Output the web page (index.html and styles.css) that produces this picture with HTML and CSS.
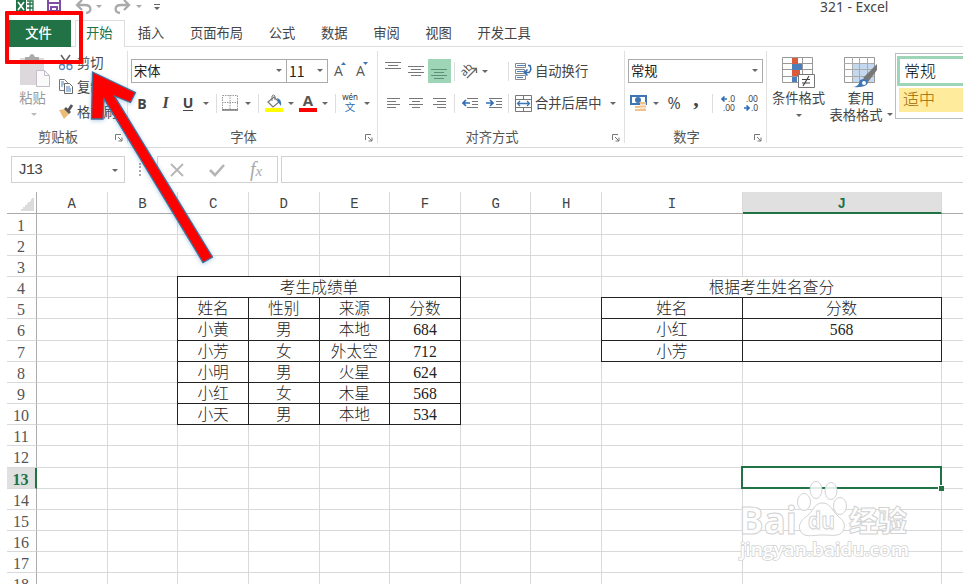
FILE: index.html
```html
<!DOCTYPE html>
<html lang="zh-CN">
<head>
    <meta charset="UTF-8">
    <title>321 - Excel</title>
    <link rel="stylesheet" href="styles.css">
</head>
<body>
    <div class="titlebar">
        <svg class="quick" width="170" height="20" viewBox="0 0 170 20">
            <rect x="16" y="0" width="10" height="14" fill="#217346"/>
            <path d="M18 2l6 8M24 2l-6 8" stroke="#fff" stroke-width="1.6"/>
            <path d="M27 1h6v11h-6M27 4h6M27 8h6M30 1v11" stroke="#217346" stroke-width="1.3" fill="none"/>
            <path d="M48 0v11h12V0M48 3h12M51 11V7h6v4" stroke="#7c4fa5" stroke-width="2" fill="none"/>
            <path d="M82 0l-5 5 5 5M77 5h8c7 0 7 7 1 8" stroke="#aaa" stroke-width="2.3" fill="none"/>
            <path d="M96 5h6l-3 3zM136 5h6l-3 3z" fill="#aaa"/>
            <path d="M124 0l5 5-5 5M129 5h-8c-7 0-7 7-1 8" stroke="#aaa" stroke-width="2.3" fill="none"/>
            <path d="M154 4h6v1h-6zM154 7h6l-3 3z" fill="#666"/>
        </svg>
        <span class="title">321 - Excel</span>
    </div>

    <div class="tabs">
        <span class="file">文件</span>
        <span class="tab active">开始</span>
        <span class="tab">插入</span>
        <span class="tab">页面布局</span>
        <span class="tab">公式</span>
        <span class="tab">数据</span>
        <span class="tab">审阅</span>
        <span class="tab">视图</span>
        <span class="tab">开发工具</span>
    </div>

    <div class="ribbon">
        <div class="group clipboard">
            <div class="clip-body">
                <div class="paste">
                    <svg width="32" height="35" viewBox="0 0 32 35">
                        <path d="M1 5h24v27H1z" fill="#dcd8dc"/>
                        <path d="M6 4h4q1-3 3-3t3 3h4v5H6z" fill="#aaa"/>
                        <path d="M17.500 17.500h8l5 5v11h-13z" fill="#fafafa" stroke="#c4bcc8"/>
                        <path d="M25.500 17.500v5h5" fill="none" stroke="#c4bcc8"/>
                    </svg>
                    <span>粘贴</span>
                    <i class="arrow dim"></i>
                </div>
                <div class="clip-list">
                    <div>
                        <svg width="16" height="17" viewBox="0 0 16 17">
                            <path d="M3 1l7 10M12 1L5 11" stroke="#666" stroke-width="1.6"/>
                            <circle cx="4" cy="13" r="2.500" fill="none" stroke="#5b8ac0" stroke-width="1.300"/>
                            <circle cx="11.500" cy="13" r="2.500" fill="none" stroke="#5b8ac0" stroke-width="1.300"/>
                        </svg>
                        <span>剪切</span>
                    </div>
                    <div>
                        <svg width="16" height="17" viewBox="0 0 16 17">
                            <path d="M1.500 1.500h5l3 3v8h-8z" fill="#fff" stroke="#777"/>
                            <path d="M6.500 5.500h5l3 3v7h-8z" fill="#fff" stroke="#666"/>
                            <path d="M3 4h3M3 6h3M3 8h2M8 9h4M8 11h5M8 13h5" stroke="#4d83bd"/>
                        </svg>
                        <span>复制</span>
                    </div>
                    <div>
                        <svg width="16" height="17" viewBox="0 0 16 17">
                            <path d="M1 7l6-1 4 5-5 5z" fill="#edbd78"/>
                            <path d="M7 5l5 5M10 8l4-6" stroke="#555" stroke-width="2.800"/>
                        </svg>
                        <span>格式刷</span>
                    </div>
                </div>
            </div>
            <div class="label">剪贴板</div>
            <svg class="launch" width="8" height="8"><use href="#launch"/></svg>
        </div>

        <div class="group font">
            <div class="row1">
                <div class="select name">宋体<i class="arrow"></i></div>
                <div class="select size">11<i class="arrow"></i></div>
                <svg class="grow" width="40" height="20" viewBox="0 0 40 20">
                    <text x="1" y="15" class="a">A</text>
                    <path d="M8 4l2.500-3L13 4z" fill="#3e75b5"/>
                    <text x="23" y="15" class="a">A</text>
                    <path d="M30 1h5l-2.500 3z" fill="#3e75b5"/>
                </svg>
            </div>
            <div class="row2 font-tools">
                <b>B</b>
                <b class="italic">I</b>
                <b class="under">U</b>
                <i class="arrow"></i>
                <i class="sep"></i>
                <svg width="16" height="16" viewBox="0 0 16 16">
                    <path d="M.5.5h15v14H.5zM8 0v15M0 7.500h16" fill="none" stroke="#999" stroke-dasharray="1.500 1"/>
                    <path d="M0 15h16" stroke="#666" stroke-width="1.300"/>
                </svg>
                <i class="arrow"></i>
                <i class="sep"></i>
                <svg width="18" height="18" viewBox="0 0 18 18">
                    <path d="M3 8l6-5 5 5-6 5z" fill="#fff" stroke="#777" stroke-width="1.200"/>
                    <path d="M7 7V2q1.500-2 3 0v4" fill="none" stroke="#777"/>
                    <path d="M12 4q5 1 4 8l-3-4z" fill="#3e75b5"/>
                    <path d="M0 14h18v4H0z" fill="#ff0"/>
                </svg>
                <i class="arrow"></i>
                <svg width="18" height="22" viewBox="0 -4 18 22">
                    <text x="9" y="12" class="fontcolor">A</text>
                    <path d="M0 14h18v4H0z" fill="#f00"/>
                </svg>
                <i class="arrow"></i>
                <i class="sep"></i>
                <svg width="18" height="22" viewBox="0 0 18 22">
                    <text x="9" y="8" class="wen">wén</text>
                    <text x="9" y="19" class="wen-zh">文</text>
                </svg>
                <i class="arrow"></i>
            </div>
            <div class="label">字体</div>
            <svg class="launch" width="8" height="8"><use href="#launch"/></svg>
        </div>

        <div class="group align">
            <div class="row1 align-tools">
                <svg width="16" height="22"><path d="M0 2.500h16M3 5.500h10M0 8.500h16" stroke="#777"/></svg>
                <svg width="16" height="22"><path d="M0 6.500h16M3 9.500h10M0 12.500h16M3 15.500h10" stroke="#777"/></svg>
                <span class="picked"><svg width="16" height="22"><path d="M0 10.500h16M3 13.500h10M0 16.500h16M3 19.500h10" stroke="#5f8f76"/></svg></span>
                <i class="sep"></i>
                <svg width="18" height="18" viewBox="0 0 18 18">
                    <text x="0" y="11" class="ab" transform="rotate(-45 6 9)">ab</text>
                    <path d="M6 16l9-9M11 6.500h4.500V11" fill="none" stroke="#666" stroke-width="1.300"/>
                </svg>
                <i class="arrow first"></i>
                <i class="sep"></i>
                <svg width="17" height="17" viewBox="0 0 17 17">
                    <path d="M.5.500h10v4H.5zM.5 6.500h9v4h-9zM.5 12.500h10v4H.5z" fill="#fff" stroke="#888"/>
                    <path d="M2 2.500h9M2 8.500h7M2 14.500h6" stroke="#4d83bd"/>
                    <path d="M13 2.500h2q2 5-1 7h-4M12.500 6.500l-3 3 3 3" fill="none" stroke="#2f6db5" stroke-width="1.600"/>
                </svg>
                <span>自动换行</span>
            </div>
            <div class="row2 align-tools">
                <svg width="13" height="12"><path d="M0 1.500h13M0 4.500h9M0 7.500h13M0 10.500h9" stroke="#777"/></svg>
                <svg width="14" height="12"><path d="M0 1.500h14M3 4.500h8M0 7.500h14M3 10.500h8" stroke="#777"/></svg>
                <svg width="13" height="12"><path d="M0 1.500h13M4 4.500h9M0 7.500h13M4 10.500h9" stroke="#777"/></svg>
                <i class="sep"></i>
                <svg width="16" height="12"><path d="M5 1.500h11M10 4.500h6M10 7.500h6M5 10.500h11" stroke="#777"/><path d="M1 6h7M4 3L1 6l3 3" fill="none" stroke="#2f6db5" stroke-width="1.700"/></svg>
                <svg width="16" height="12"><path d="M3 1.500h13M10 4.500h6M10 7.500h6M3 10.500h13" stroke="#777"/><path d="M0 6h7M4 3l3 3-3 3" fill="none" stroke="#2f6db5" stroke-width="1.700"/></svg>
                <i class="sep"></i>
                <svg width="17" height="17" viewBox="0 0 17 17">
                    <path d="M.5.500h16v16H.5zM.5 4.500h16M.5 12.500h16M8.500 0v4M8.500 13v4" fill="#fff" stroke="#777"/>
                    <path d="M3 8.500h11M5 6L2.500 8.500 5 11M12 6l2.500 2.500L12 11" fill="none" stroke="#3e75b5" stroke-width="1.300"/>
                </svg>
                <span>合并后居中</span>
                <i class="arrow"></i>
            </div>
            <div class="label">对齐方式</div>
            <svg class="launch" width="8" height="8"><use href="#launch"/></svg>
        </div>

        <div class="group number">
            <div class="row1">
                <div class="select format">常规<i class="arrow"></i></div>
            </div>
            <div class="row2 number-tools">
                <svg width="18" height="18" viewBox="0 0 18 18">
                    <path d="M0 1h17v10H0z" fill="#3e75b5"/>
                    <path d="M2 3h13v6H2z" fill="#fff"/>
                    <circle cx="8" cy="6" r="3" fill="#3e75b5"/>
                    <path d="M10 8h6v9h-6zM5 12h6v5H5z" fill="#f0c28a"/>
                    <path d="M10 11h6M10 14h6M5 14.500h5" stroke="#fff"/>
                </svg>
                <i class="arrow"></i>
                <span class="percent">%</span>
                <span class="comma">,</span>
                <i class="sep"></i>
                <svg width="17" height="20" viewBox="0 0 17 20">
                    <path d="M2 6h5M4.500 3.500L2 6l2.500 2.500" fill="none" stroke="#2f6db5" stroke-width="1.700"/>
                    <text x="8" y="9" class="dec">.0</text>
                    <text x="3" y="18" class="dec">.00</text>
                </svg>
                <svg width="17" height="20" viewBox="0 0 17 20">
                    <text x="3" y="9" class="dec">.00</text>
                    <path d="M1 15h5M3.500 12.500L6 15l-2.500 2.500" fill="none" stroke="#2f6db5" stroke-width="1.700"/>
                    <text x="8" y="18" class="dec">.0</text>
                </svg>
            </div>
            <div class="label">数字</div>
            <svg class="launch" width="8" height="8"><use href="#launch"/></svg>
        </div>

        <div class="group styles">
            <div class="big">
                <svg width="34" height="32" viewBox="0 0 34 32">
                    <path d="M.5.500h30v25H.5zM10.500 0v25M20.500 0v25M0 6.500h30M0 12.500h30M0 19.500h30" fill="#fff" stroke="#999"/>
                    <path d="M10 1h6v6h-6zM10 13h8v6h-8z" fill="#dd5b3a"/>
                    <path d="M10 7h10v6H10zM10 20h5v5h-5z" fill="#4a7fbb"/>
                    <path d="M16.500 17.500h16v13h-16z" fill="#fff" stroke="#777"/>
                    <path d="M20 22.500h8M20 26h8M27 19l-6 10" stroke="#444" stroke-width="1.200"/>
                </svg>
                <span>条件格式</span>
                <i class="arrow"></i>
            </div>
            <div class="big table-format">
                <svg width="34" height="32" viewBox="0 0 34 32">
                    <path d="M.5.500h30v25H.5z" fill="#fff" stroke="#999"/>
                    <path d="M8 6h22v19H8z" fill="#c4d9ef"/>
                    <path d="M8.500 0v25M15.500 0v25M23.500 0v25M0 6.500h30M0 12.500h30M0 19.500h30" stroke="#aaa"/>
                    <path d="M33 7v6l-9 12-5-4z" fill="#777"/>
                    <path d="M9 30q6 0 7-7 6-3 8 2 0 6-15 5z" fill="#3e75b5"/>
                    <circle cx="20" cy="26" r="2" fill="#fff"/>
                </svg>
                <span>套用</span>
                <span class="wide">表格格式<i class="arrow"></i></span>
            </div>
            <div class="gallery">
                <div class="normal">常规</div>
                <div class="neutral">适中</div>
            </div>
        </div>
    </div>

    <div class="formula">
        <div class="namebox">J13<i class="arrow"></i></div>
        <span class="dots"></span>
        <div class="fx">
            <svg width="14" height="14"><path d="M1 1l12 12M13 1L1 13" stroke="#b5b5b5" stroke-width="1.800"/></svg>
            <svg width="16" height="14"><path d="M1 7l5 5 9-10" fill="none" stroke="#b5b5b5" stroke-width="2.600"/></svg>
            <span>f<small>x</small></span>
        </div>
        <div class="input"></div>
    </div>

    <div class="sheet" id="sheet"></div>

    <svg class="watermark" width="180" height="90" viewBox="0 0 180 90">
        <text x="3" y="54" class="brand" textLength="58" lengthAdjust="spacingAndGlyphs">Bai</text>
        <ellipse cx="68" cy="22" rx="6.500" ry="8.500"/>
        <ellipse cx="80" cy="10" rx="6" ry="8.500"/>
        <ellipse cx="95" cy="11" rx="6" ry="8.500"/>
        <ellipse cx="104" cy="26" rx="6.500" ry="8.500"/>
        <path d="M86 23c9 0 10 8 16 13s8 9 5 15-12 4-21 4-17 3-21-3 0-12 6-16 7-13 15-13z"/>
        <text x="72" y="49" class="du" textLength="27" lengthAdjust="spacingAndGlyphs">du</text>
        <text x="113" y="52" class="zh" textLength="58">经验</text>
        <text x="4" y="76" class="url" textLength="169" lengthAdjust="spacingAndGlyphs">jingyan.baidu.com</text>
    </svg>

    <div class="highlight"></div>
    <svg class="pointer" width="240" height="280" viewBox="0 0 240 280">
        <path d="M92.500 72L135.500 92.500 130.500 102.500 114.500 96 212.500 257 203 262.500 104 99 103 119 91.500 119z"/>
    </svg>

    <svg width="0" height="0" class="defs">
        <symbol id="launch" viewBox="0 0 8 8">
            <path d="M.5 6V.5H6M3 3l4 4M7 3.500V7H3.500" fill="none" stroke="#777"/>
        </symbol>
    </svg>

    <script>
      const sheet = document.getElementById("sheet");
      const letters = "ABCDEFGHIJ";

      // cells with borders, by address
      const boxed = {};
      const scores = [
          ["姓名", "性别", "来源", "分数"],
          ["小黄", "男", "本地", "684"],
          ["小芳", "女", "外太空", "712"],
          ["小明", "男", "火星", "624"],
          ["小红", "女", "木星", "568"],
          ["小天", "男", "本地", "534"]
      ];
      const lookup = [["姓名", "分数"], ["小红", "568"], ["小芳", ""]];
      scores.forEach((r, i) => r.forEach((v, j) => boxed["CDEF"[j] + (i + 5)] = v));
      lookup.forEach((r, i) => r.forEach((v, j) => boxed["IJ"[j] + (i + 5)] = v));

      const merged = { C4: ["考生成绩单", 4, "cell box"], I4: ["根据考生姓名查分", 2, "cell"] };
      const covered = ["D4", "E4", "F4", "J4"];

      const add = (cls, text, row, col, span = 1) => {
          let div = document.createElement("div");
          div.className = cls;
          div.textContent = text;
          div.style.gridArea = `${row} / ${col} / auto / span ${span}`;
          sheet.appendChild(div);
      };

      add("corner", "", 1, 1);
      [...letters, ""].forEach((l, i) => add(l === "J" ? "col on" : "col", l, 1, i + 2));

      for (let r = 1; r <= 18; r++) {
          add(r === 13 ? "num on" : "num", r, r + 1, 1);
          [...letters, ""].forEach((l, i) => {
              let id = l + r;
              if (covered.includes(id)) return;
              if (merged[id]) {
                  add(merged[id][2], merged[id][0], r + 1, i + 2, merged[id][1]);
              } else if (l && id in boxed) {
                  add("cell box", boxed[id], r + 1, i + 2);
              } else {
                  add(id === "J13" ? "cell selected" : "cell", "", r + 1, i + 2);
              }
          });
      }
    </script>
</body>
</html>
```

FILE: styles.css
```css
* {
    box-sizing: border-box;
}
body {
    position: relative;
    width: 963px;
    height: 584px;
    margin: 0;
    overflow: hidden;
    background-color: white;
    color: #444;
    font-family: "Noto Sans", "Noto Sans CJK SC", sans-serif;
    font-size: 13.3px;
}
svg {
    display: block;
    flex-shrink: 0;
}
.defs {
    position: absolute;
}
.arrow {
    display: block;
    width: 0;
    border: 3px solid transparent;
    border-top: 3.5px solid #666;
    border-bottom: 0;
}
.arrow.dim {
    border-top-color: #bbb;
}
.sep {
    width: 1px;
    height: 19px;
    background-color: #ddd;
}

/* title and tabs */
.titlebar {
    display: flex;
    height: 20px;
}
.title {
    margin-left: 650px;
    line-height: 14px;
    font-size: 13.9px;
}
.tabs {
    display: flex;
    height: 27px;
    margin-left: 7px;
    border-bottom: 1px solid #ddd;
    line-height: 25px;
    font-family: "Noto Sans CJK SC", sans-serif;
}
.file {
    width: 62px;
    height: 27px;
    margin: 0 4px 0 2px;
    padding-right: 3px;
    background-color: #217346;
    color: white;
    text-align: center;
    font-weight: 500;
}
.tab {
    padding: 0 12.8px;
}
.tab.active {
    width: 50px;
    height: 27px;
    padding: 0 10px;
    border: 1px solid #ddd;
    border-bottom: 0;
    background-color: white;
    color: #217346;
    line-height: 24px;
}

/* ribbon */
.ribbon {
    display: flex;
    height: 101px;
    margin-left: 7px;
    border-bottom: 1px solid #d8d8d8;
    font-family: "Noto Sans CJK SC", sans-serif;
}
.group {
    position: relative;
    flex-shrink: 0;
    padding-top: 12px;
}
.group::after {
    content: "";
    position: absolute;
    top: 4px;
    right: 0;
    width: 1px;
    height: 92px;
    background-color: #e0e0e0;
}
.clipboard {
    width: 121px;
}
.font {
    width: 250px;
    padding-left: 3px;
}
.align {
    width: 247px;
    padding-left: 4px;
}
.number {
    width: 142px;
    padding-left: 3px;
}
.label {
    position: absolute;
    left: 0;
    right: 19px;
    bottom: 1px;
    text-align: center;
    line-height: 18px;
    color: #555;
}
.launch {
    position: absolute;
    right: 5px;
    bottom: 5px;
}
.row1 {
    display: flex;
    align-items: center;
    height: 24px;
}
.row2 {
    display: grid;
    height: 22px;
    margin-top: 9px;
    align-items: center;
    justify-items: center;
}
.clip-body {
    display: flex;
    margin-top: -6px;
}
.paste {
    display: flex;
    flex-direction: column;
    align-items: center;
    width: 51px;
    color: #999;
    line-height: 20px;
}
.paste .arrow {
    margin: 5px 0 0 3px;
}
.paste svg {
    margin-left: 4px;
}
.clip-list > div {
    display: flex;
    align-items: center;
    gap: 3px;
    height: 24.5px;
    white-space: nowrap;
}
.clip-list {
    margin-top: -3px;
}
.select {
    display: flex;
    align-items: center;
    justify-content: space-between;
    height: 24px;
    padding: 0 4px 1px 2px;
    border: 1px solid #ababab;
    color: #222;
}
.select.name {
    width: 156px;
}
.select.size {
    width: 42px;
    margin-left: -1px;
    font-size: 14px;
}
.select.format {
    width: 135px;
}
.grow {
    margin-left: 5px;
}
.a {
    font: 14px "Open Sans", sans-serif;
    fill: #555;
}
.font-tools {
    grid-template-columns: 22px 25px 20px 16px 4px 24px 12px 8px 23px 11px 23px 12px 8px 22px 12px;
}
.font-tools b {
    font: bold 14px "Open Sans", sans-serif;
}
.font-tools .italic {
    font: italic bold 16px "Liberation Serif", serif;
}
.font-tools .under {
    border-bottom: 1.5px solid #444;
    line-height: 14px;
}
.font-tools svg[viewBox^="0 -4"] {
    margin-top: -4px;
}
.fontcolor {
    font: bold 15px "Open Sans", sans-serif;
    text-anchor: middle;
    fill: #555;
}
.wen {
    font: 8px "Noto Sans", sans-serif;
    text-anchor: middle;
    fill: #333;
}
.wen-zh {
    font: 10.5px "Noto Sans CJK SC", sans-serif;
    text-anchor: middle;
    fill: #2f6db5;
}
.align-tools {
    display: grid;
    grid-template-columns: 22px 23px 24px 7px 24px 23px 7px 23px 68px 20px;
    justify-items: center;
    line-height: 18px;
    white-space: nowrap;
}
.align-tools span:not(.picked) {
    justify-self: start;
}
.align-tools .first {
    justify-self: start;
}
.picked {
    display: flex;
    justify-content: center;
    width: 23px;
    height: 24px;
    background-color: #9fd5b7;
}
.ab {
    font: 11px "Open Sans", sans-serif;
    fill: #444;
}
.number-tools {
    grid-template-columns: 22px 12px 24px 20px 13px 18px 28px;
}
.percent {
    font: 16px "Open Sans", sans-serif;
}
.comma {
    margin-top: -9px;
    font: bold 22px/10px "Liberation Serif", serif;
}
.dec {
    font: 8.5px "Open Sans", sans-serif;
    fill: #333;
}
.styles {
    display: flex;
    width: 197px;
    padding-top: 10px;
    overflow: hidden;
}
.styles::after {
    display: none;
}
.big {
    display: flex;
    flex-direction: column;
    flex-shrink: 0;
    align-items: center;
    width: 63px;
    line-height: 17px;
}
.big span {
    white-space: nowrap;
}
.big > .arrow {
    margin-top: 8px;
}
.table-format {
    width: 62px;
}
.wide {
    display: flex;
    align-items: center;
    gap: 4px;
}
.gallery {
    flex-shrink: 0;
    width: 90px;
    height: 66px;
    margin: -4px 0 0 3px;
    padding: 2px 1px;
    border: 1px solid #b8bcc8;
    font-size: 16px;
    font-weight: 300;
}
.normal {
    height: 30px;
    padding-left: 4px;
    border: 3px solid #9fd5b7;
    color: #000;
    line-height: 22px;
}
.neutral {
    height: 24px;
    margin: 2px 0 0 2px;
    padding-left: 4px;
    background-color: #ffeb9c;
    color: #9c6500;
    line-height: 21px;
}

/* formula bar */
.formula {
    display: flex;
    height: 44px;
    padding: 8px 0 9px 11px;
}
.namebox, .fx, .input {
    display: flex;
    align-items: center;
    border: 1px solid #d0d0d0;
}
.namebox {
    justify-content: space-between;
    width: 114px;
    padding: 2px 6px 0;
    font: 15px "Liberation Mono", monospace;
    letter-spacing: -1px;
}
.dots {
    width: 3px;
    height: 13px;
    margin: 7px 13px 0 14px;
    border-left: 2px dotted #aaa;
}
.fx {
    width: 121px;
    margin-left: 2px;
    padding-left: 12px;
    gap: 25px;
    color: #aaa;
    font: italic 20px "Liberation Serif", serif;
}
.fx small {
    font-size: 15px;
}
.input {
    flex: 1;
    margin-left: 3px;
    border-right: 0;
}

/* sheet, the last column runs off the window */
.sheet {
    display: grid;
    grid-template-columns: 30px repeat(8, 70.65px) 140.5px 199px 40px;
    grid-template-rows: 21.5px repeat(18, 21.18px);
    margin-left: 7px;
}
.corner, .col, .num, .cell {
    border-right: 1px solid #d9d9d9;
    border-bottom: 1px solid #d9d9d9;
    text-align: center;
}
.corner {
    border-color: #ababab;
    background: linear-gradient(135deg, transparent 50%, #dcdcdc 50%) 13px 5px / 14px 14px no-repeat;
}
.col {
    border-bottom-color: #ababab;
    font: 14px/24px "Liberation Mono", monospace;
}
.col.on {
    border-bottom: 2px solid #217346;
    background-color: #e0e0e0;
    color: #217346;
    font-weight: bold;
}
.num {
    padding-right: 1px;
    border-right-color: #ababab;
    color: #555;
    font: 16px/23px "Liberation Serif", serif;
}
.num.on {
    border-right: 2px solid #217346;
    background-color: #e0e0e0;
    color: #217346;
    font-weight: bold;
}
.cell {
    color: #222;
    font: 300 15.7px/21px "Liberation Serif", "Noto Sans CJK SC", serif;
    white-space: nowrap;
}
.box {
    position: relative;
    margin: -1px 0 0 -1px;
    border: 1px solid #222;
}
.selected {
    position: relative;
}
.selected::before {
    content: "";
    position: absolute;
    inset: -2px -1px -1px -2px;
    border: 2px solid #217346;
}
.selected::after {
    content: "";
    position: absolute;
    right: -3px;
    bottom: -3px;
    width: 5px;
    height: 5px;
    border: solid white;
    border-width: 1px 0 0 1px;
    background-color: #217346;
}

/* drawn over the window */
.watermark {
    position: absolute;
    left: 736px;
    top: 480px;
    fill: rgba(255, 255, 255, 0.85);
    stroke: #d2d2d2;
    stroke-width: 1px;
}
.brand {
    font: bold 37px "Open Sans", sans-serif;
}
.du {
    font: bold 23px "Open Sans", sans-serif;
}
.zh {
    font: 900 29px "Noto Sans CJK SC", sans-serif;
}
.url {
    font: 600 18px "Open Sans", sans-serif;
    fill: white;
    stroke-width: 1.5px;
    paint-order: stroke;
}
.highlight {
    position: absolute;
    left: 5px;
    top: 11px;
    width: 78px;
    height: 53px;
    border: 4px solid #f00;
    border-radius: 1px;
}
.pointer {
    position: absolute;
    left: 0;
    top: 0;
    fill: #f00;
    stroke: #41719c;
    stroke-width: 1.3px;
    filter: drop-shadow(0 1px 2px rgba(91, 155, 213, 0.5));
}
```
